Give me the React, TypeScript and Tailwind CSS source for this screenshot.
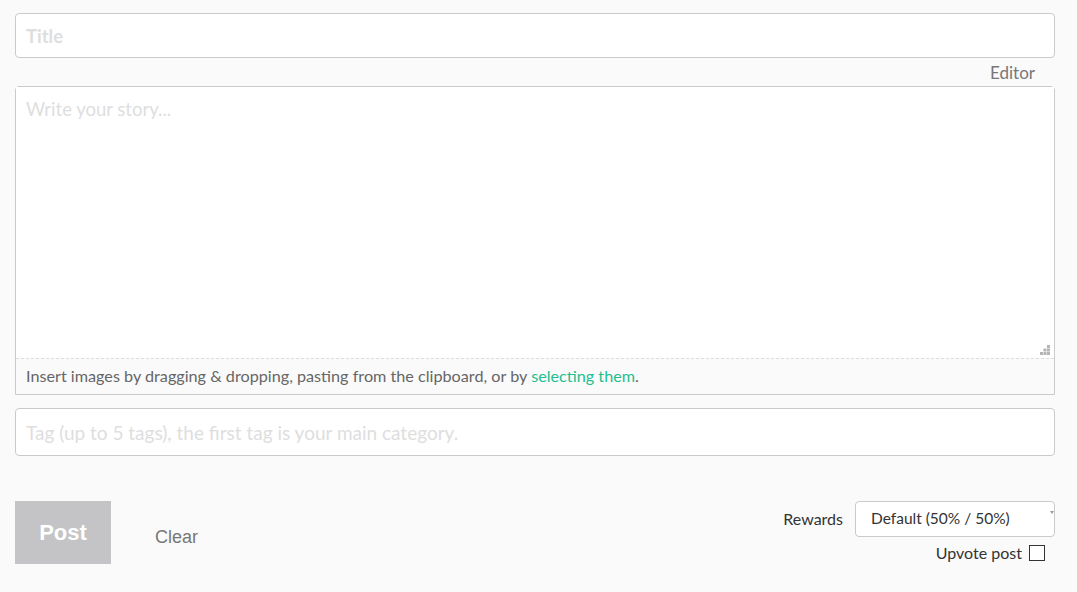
import React from "react";

export default function App() {
  const sans = { fontFamily: "Lato, 'Noto Sans', sans-serif" };
  return (
    <div className="w-[1077px] h-[592px] bg-[#fafafa] overflow-hidden" style={sans}>
      <div className="px-[15px] pt-[13px] w-[1070px]">
        <input
          className="w-full h-[45px] border border-[#cacaca] rounded-[4px] bg-white px-[10px] text-[18.5px] font-bold placeholder:text-[#dedede] outline-none"
          placeholder="Title"
          style={sans}
        />
        <div className="flex justify-end h-[28px] items-center pr-[20px]">
          <span className="text-[17px] text-[#777] leading-none">Editor</span>
        </div>
        <div className="border border-[#cacaca] rounded-t-[4px] bg-white">
          <div className="relative h-[271px]">
            <textarea
              className="w-full h-full resize-none px-[10px] pt-[9px] text-[18.5px] placeholder:text-[#dedede] outline-none bg-white"
              placeholder="Write your story..."
              style={sans}
            />
            <svg className="absolute right-[3px] bottom-[2px]" width="11" height="11" viewBox="0 0 11 11">
              <rect x="7" y="0" width="3" height="3" fill="#b5b5b5" />
              <rect x="3.5" y="3.5" width="3" height="3" fill="#b5b5b5" />
              <rect x="7" y="3.5" width="3" height="3" fill="#b5b5b5" />
              <rect x="0" y="7" width="3" height="3" fill="#b5b5b5" />
              <rect x="3.5" y="7" width="3" height="3" fill="#b5b5b5" />
              <rect x="7" y="7" width="3" height="3" fill="#b5b5b5" />
            </svg>
          </div>
          <div className="border-t border-dashed border-[#dedede] bg-[#fafafa] h-[36px] flex items-center px-[10px] text-[16.2px] text-[#666]">
            <span>
              Insert images by dragging &amp; dropping, pasting from the clipboard, or by{" "}
              <span className="text-[#1fbf8f]">selecting them</span>.
            </span>
          </div>
        </div>
        <input
          className="mt-[13px] w-full h-[48px] border border-[#cacaca] rounded-[4px] bg-white px-[10px] text-[19px] placeholder:text-[#dedede] outline-none"
          placeholder="Tag (up to 5 tags), the first tag is your main category."
          style={sans}
        />
        <div className="flex justify-between mt-[45px]">
          <div className="flex items-start">
            <button
              className="w-[96px] h-[63px] bg-[#c4c4c6] text-white text-[22px] font-bold"
              style={{ fontFamily: "'Liberation Sans', Arial, sans-serif" }}
            >
              Post
            </button>
            <button
              className="ml-[44px] mt-[23px] text-[18px] text-[#777]"
              style={{ fontFamily: "'Liberation Sans', Arial, sans-serif" }}
            >
              Clear
            </button>
          </div>
          <div className="flex flex-col items-end">
            <div className="flex items-center">
              <span className="text-[16px] text-[#333] mr-[12px]">Rewards</span>
              <div className="relative w-[200px] h-[36px] border border-[#cacaca] rounded-[4px] bg-white flex items-center px-[15px] text-[15.5px] text-[#333]">
                Default (50% / 50%)
                <span className="absolute right-[0px] top-[9px] w-0 h-0 border-l-[2px] border-r-[2px] border-t-[3px] border-l-transparent border-r-transparent border-t-[#999]" />
              </div>
            </div>
            <div className="flex items-center mt-[4px] mr-[10px]">
              <span className="text-[16px] text-[#333] mr-[7px]">Upvote post</span>
              <span className="w-[16px] h-[16px] border border-[#333] bg-white" />
            </div>
          </div>
        </div>
      </div>
    </div>
  );
}
